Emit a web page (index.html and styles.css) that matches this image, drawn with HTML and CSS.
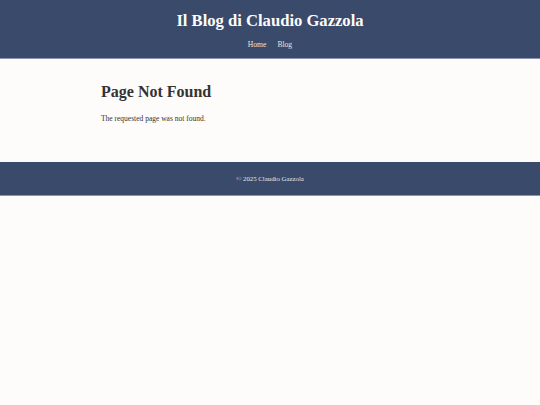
FILE: index.html
```html
<!DOCTYPE html>
<html lang="it">
<head>
<meta charset="utf-8">
<title>Page Not Found</title>
<link rel="stylesheet" href="styles.css">
</head>
<body>
<header class="site-header">
  <h1 class="site-title">Il Blog di Claudio Gazzola</h1>
  <nav class="site-nav">
    <a href="#">Home</a>
    <a href="#">Blog</a>
  </nav>
</header>
<main class="content">
  <h2 class="page-title">Page Not Found</h2>
  <p class="page-text">The requested page was not found.</p>
</main>
<footer class="site-footer">
  <p>© 2025 Claudio Gazzola</p>
</footer>
</body>
</html>
```
FILE: styles.css
```css
html, body {
  margin: 0;
  padding: 0;
  background: #fdfcfa;
  font-family: "Liberation Serif", "Times New Roman", serif;
  color: #333;
}
.site-header {
  background: #3a4a6b;
  height: 59px;
  border-bottom: 1px solid #8c95ad;
  display: flex;
  flex-direction: column;
  align-items: center;
  padding-top: 11px;
  box-sizing: border-box;
}
.site-title {
  margin: 0;
  font-size: 16.6px;
  line-height: 20px;
  font-weight: bold;
  color: #fdfcfa;
}
.site-nav {
  margin-top: 9px;
  display: flex;
  gap: 11px;
}
.site-nav a {
  color: #ece4d4;
  text-decoration: none;
  font-size: 7.6px;
  line-height: 10px;
}
.content {
  width: 338px;
  margin: 0 auto;
  padding: 23px 0 38px;
}
.page-title {
  margin: 0;
  font-size: 16px;
  line-height: 20px;
  font-weight: bold;
  color: #333;
}
.page-text {
  margin: 12px 0 0;
  font-size: 7.5px;
  line-height: 10px;
}
.site-footer {
  background: #3a4a6b;
  height: 34px;
  border-bottom: 1px solid #8c95ad;
  display: flex;
  align-items: center;
  justify-content: center;
  box-sizing: border-box;
}
.site-footer p {
  margin: 0;
  color: #e8e6ea;
  font-size: 6.8px;
}
```
